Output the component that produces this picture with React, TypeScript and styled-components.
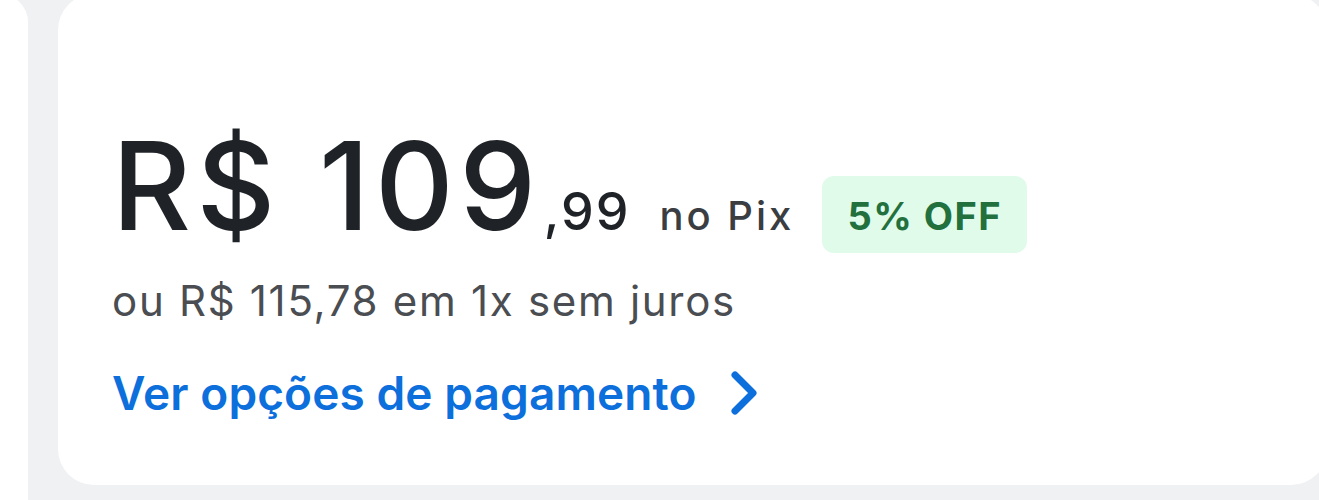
import styled, { createGlobalStyle } from 'styled-components'

const GlobalStyle = createGlobalStyle`
  html, body {
    margin: 0;
    padding: 0;
    background: #f0f1f3;
  }
  body {
    font-family: 'Inter', 'Liberation Sans', sans-serif;
  }
`

const Page = styled.div`
  width: 1319px;
  height: 500px;
  display: flex;
  gap: 30px;
  overflow: hidden;
  background: #f0f1f3;
`

const SidePanel = styled.div`
  width: 28px;
  flex-shrink: 0;
  margin-top: -6px;
  height: 520px;
  background: #ffffff;
  border-top-right-radius: 30px;
`

const PriceCard = styled.section`
  flex: 1;
  margin-top: -6px;
  margin-right: -8px;
  height: 491px;
  background: #ffffff;
  border-radius: 36px;
  padding: 131px 0 0 54px;
  box-sizing: border-box;
`

const PriceRow = styled.div`
  display: flex;
  align-items: baseline;
  height: 130px;
  line-height: 1;
`

const MainPrice = styled.span`
  font-size: 122px;
  font-weight: 500;
  color: #1f2327;
  letter-spacing: 5.5px;
`

const Cents = styled.span`
  font-size: 52px;
  font-weight: 500;
  color: #1f2327;
  letter-spacing: 2px;
  margin-left: 2px;
`

const PixLabel = styled.span`
  font-size: 40px;
  font-weight: 500;
  color: #3a3d41;
  letter-spacing: 3px;
  margin-left: 29px;
`

const Badge = styled.span`
  margin-left: 28px;
  display: inline-block;
  padding: 20px 25px 17px;
  line-height: 40px;
  background: #e0fbea;
  border-radius: 12px;
  font-size: 38px;
  font-weight: 700;
  letter-spacing: 1.5px;
  color: #22703d;
`

const Installments = styled.p`
  margin: 18px 0 0;
  font-size: 42px;
  line-height: 56px;
  letter-spacing: 1.7px;
  color: #4a4d51;
`

const PaymentLink = styled.a`
  margin-top: 36px;
  display: inline-flex;
  align-items: center;
  gap: 32px;
  font-size: 46px;
  line-height: 56px;
  font-weight: 600;
  letter-spacing: 0.1px;
  color: #0c6fdc;
  text-decoration: none;
`

const Chevron = () => (
  <svg width="30" height="46" viewBox="0 0 30 46" fill="none">
    <path d="M6 5 L24 23 L6 41" stroke="#0c6fdc" strokeWidth="7" strokeLinecap="round" strokeLinejoin="round" />
  </svg>
)

const App = () => {
  return (
    <>
      <GlobalStyle />
      <Page>
        <SidePanel />
        <PriceCard>
          <PriceRow>
            <MainPrice>R$ 109</MainPrice>
            <Cents>,99</Cents>
            <PixLabel>no Pix</PixLabel>
            <Badge>5% OFF</Badge>
          </PriceRow>
          <Installments>ou R$ 115,78 em 1x sem juros</Installments>
          <PaymentLink href="#">
            Ver opções de pagamento
            <Chevron />
          </PaymentLink>
        </PriceCard>
      </Page>
    </>
  )
}

export default App
